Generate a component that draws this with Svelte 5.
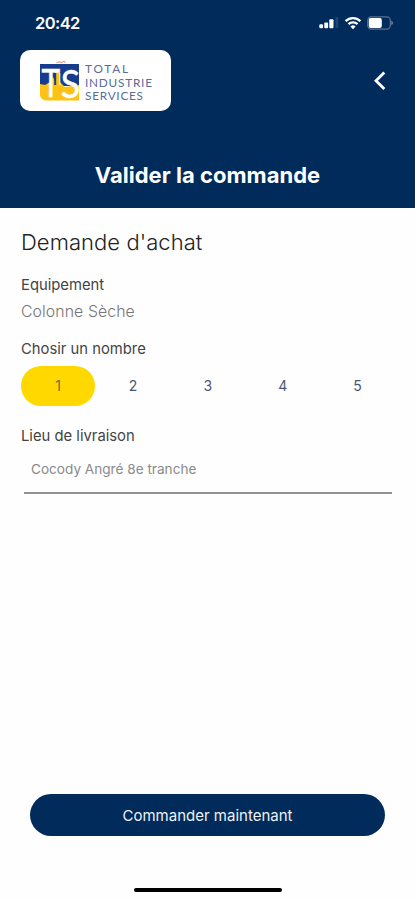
<script lang="ts">
	const equipment = 'Colonne Sèche';
	const quantities = [1, 2, 3, 4, 5];

	let quantity = $state(1);
	let address = $state('Cocody Angré 8e tranche');
</script>

<div class="screen">
	<header class="header">
		<div class="status-bar">
			<span class="time">20:42</span>
			<div class="status-icons">
				<svg width="20" height="14" viewBox="0 0 20 14" aria-hidden="true">
					<rect x="0.3" y="8.3" width="3.8" height="4" rx="1.2" fill="#fff" />
					<rect x="5.3" y="6.6" width="3.8" height="5.7" rx="1" fill="#fff" />
					<rect x="10.3" y="3.2" width="4.2" height="9.1" rx="1" fill="#fff" />
					<rect x="16.4" y="1" width="2.8" height="11.3" rx="1" fill="#1f4570" />
				</svg>
				<svg class="wifi" width="18" height="14" viewBox="0 0 18 14" aria-hidden="true">
					<g fill="none" stroke="#fff" stroke-width="2.3">
						<path d="M1.6 5.1a10.6 10.6 0 0 1 14.8 0" />
						<path d="M4.5 8.2a6.5 6.5 0 0 1 9 0" />
					</g>
					<path d="M9 13.2 6.4 10.6a3.7 3.7 0 0 1 5.2 0z" fill="#fff" />
				</svg>
				<svg class="battery" width="27" height="14" viewBox="0 0 27 14" aria-hidden="true">
					<rect x="0.7" y="0.9" width="22.6" height="12.2" rx="3.6" fill="none" stroke="#58718f" stroke-width="1.2" />
					<rect x="1.8" y="2" width="13" height="10" rx="2" fill="#fff" />
					<path d="M24.4 4.8c1.9.7 1.9 3.7 0 4.4z" fill="#8294aa" />
				</svg>
			</div>
		</div>

		<div class="top-row">
			<div class="logo">
				<svg class="logo-mark" width="42" height="42" viewBox="0 0 42 42" aria-hidden="true">
					<path d="M1 4h39v22H1z" fill="#173c8e" />
					<path d="M1 24l5 1 5-3 3-5 2 4v-9h5v10l5 5 14-2v15.5H7a6 6 0 0 1-6-6z" fill="#fdc214" />
					<path d="M17.5 3l3-1.4 1.5 1.2 3-1.6 1.5 1.6" fill="none" stroke="#f4a083" stroke-width="1.2" />
					<path d="M16.2 13v12" stroke="#173c8e" stroke-width="2" />
					<path d="M20.8 13v12" stroke="#fff" stroke-width="1" />
					<g class="mark-letters" fill="#fff" stroke="#fff" stroke-width="0.5">
						<text x="2.4" y="37" font-size="39" textLength="18.6" lengthAdjust="spacingAndGlyphs">T</text>
						<text x="21.8" y="38" font-size="39" textLength="19.4" lengthAdjust="spacingAndGlyphs">S</text>
					</g>
				</svg>
				<svg class="logo-name" width="70" height="42" viewBox="0 0 70 42">
					<g fill="#5a6b9c" font-size="11.8">
						<text x="0" y="13.2" textLength="43">TOTAL</text>
						<text x="0" y="27" textLength="67">INDUSTRIE</text>
						<text x="0" y="40.4" textLength="58">SERVICES</text>
					</g>
				</svg>
			</div>
			<button class="back" type="button" aria-label="Retour">
				<svg width="14" height="22" viewBox="0 0 14 22" aria-hidden="true">
					<path d="M11.3 2.4 3 10.7l8.3 8.3" fill="none" stroke="#fff" stroke-width="2.8" />
				</svg>
			</button>
		</div>

		<h1>Valider la commande</h1>
	</header>

	<main class="content">
		<h2>Demande d'achat</h2>

		<div class="label">Equipement</div>
		<div class="equipment">{equipment}</div>

		<div class="label number-label">Chosir un nombre</div>
		<div class="quantities">
			{#each quantities as n (n)}
				<button
					class="quantity"
					class:active={quantity === n}
					onclick={() => (quantity = n)}
					type="button"
				>
					{n}
				</button>
			{/each}
		</div>

		<label class="label place-label" for="address">Lieu de livraison</label>
		<input id="address" class="address" type="text" bind:value={address} />
	</main>

	<footer class="footer">
		<button class="submit" type="button">Commander maintenant</button>
		<div class="home-indicator"></div>
	</footer>
</div>

<style>
	:global(body) {
		margin: 0;
		background: #fff;
	}

	.screen {
		display: flex;
		flex-direction: column;
		box-sizing: border-box;
		height: 900px;
		background: #fefefe;
		font-family: Inter, 'Liberation Sans', sans-serif;
		color: #333;
	}

	button {
		border: none;
		padding: 0;
		background: none;
		font-family: inherit;
		cursor: pointer;
	}

	.header {
		height: 208px;
		background: #002b5b;
		color: #fff;
	}

	.status-bar {
		display: flex;
		justify-content: space-between;
		align-items: center;
		height: 50px;
		padding: 0 21px 4px 35px;
		box-sizing: border-box;
	}

	.time {
		font-size: 16.5px;
		font-weight: 600;
		letter-spacing: -0.6px;
	}

	.status-icons {
		display: flex;
		align-items: center;
	}

	.wifi {
		margin-left: 5px;
	}

	.battery {
		margin-left: 5px;
	}

	.top-row {
		display: flex;
		justify-content: space-between;
		align-items: center;
		padding: 0 28px 0 20px;
	}

	.logo {
		display: flex;
		align-items: center;
		box-sizing: border-box;
		width: 151px;
		height: 61px;
		padding-left: 19px;
		border-radius: 10px;
		background: #fff;
	}

	.logo-mark {
		flex: none;
		overflow: visible;
	}

	.mark-letters {
		font-family: Lato, sans-serif;
	}

	.logo-name {
		margin-left: 4px;
		overflow: visible;
		font-family: Lato, sans-serif;
	}

	.back {
		display: flex;
	}

	h1 {
		margin: 49px 0 0;
		font-size: 22px;
		font-weight: 700;
		line-height: 30px;
		letter-spacing: 0.03px;
		text-align: center;
	}

	.content {
		display: flex;
		flex-direction: column;
		padding: 19px 20px 0 21px;
	}

	h2 {
		margin: 0;
		font-size: 22px;
		font-weight: 300;
		line-height: 30px;
		letter-spacing: 0.05px;
		color: #222;
	}

	.label {
		margin-top: 18px;
		font-size: 14.8px;
		line-height: 20px;
		color: #444;
	}

	.equipment {
		margin-top: 7px;
		font-size: 15.8px;
		font-weight: 300;
		line-height: 20px;
		letter-spacing: 0.1px;
		color: #757575;
	}

	.number-label {
		margin-top: 17px;
	}

	.quantities {
		display: flex;
		margin-top: 7px;
		margin-left: -0.4px;
	}

	.quantity {
		width: 75px;
		height: 40px;
		padding-bottom: 2px;
		border-radius: 20px;
		font-size: 14px;
		color: #4c5570;
	}

	.quantity.active {
		background: #ffd800;
		color: #776d20;
	}

	.place-label {
		margin-top: 20px;
	}

	.address {
		box-sizing: border-box;
		height: 48px;
		margin: 0 3px;
		padding: 0 7px 1px;
		border: none;
		border-bottom: 2px solid #929292;
		background: none;
		font-family: inherit;
		font-size: 13.6px;
		color: #8a8a8a;
		outline: none;
	}

	.footer {
		display: flex;
		flex-direction: column;
		align-items: center;
		margin-top: auto;
		padding: 0 30px 8px;
	}

	.submit {
		width: 100%;
		height: 42px;
		border-radius: 21px;
		background: #002b5b;
		font-size: 15px;
		color: #eef1f5;
	}

	.home-indicator {
		width: 148px;
		height: 4px;
		margin-top: 52px;
		border-radius: 2px;
		background: #000;
	}
</style>
